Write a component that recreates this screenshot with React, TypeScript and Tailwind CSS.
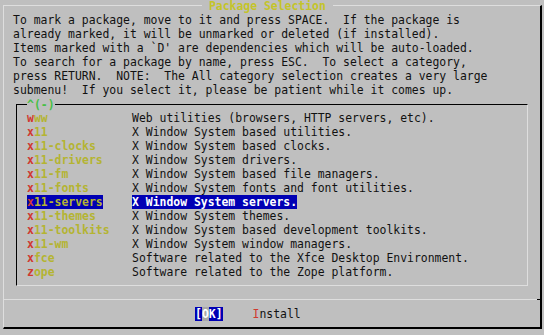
const intro = [
  "To mark a package, move to it and press SPACE.  If the package is",
  "already marked, it will be unmarked or deleted (if installed).",
  "Items marked with a `D' are dependencies which will be auto-loaded.",
  "To search for a package by name, press ESC.  To select a category,",
  "press RETURN.  NOTE:  The All category selection creates a very large",
  "submenu!  If you select it, please be patient while it comes up.",
];

const packages = [
  { name: "www", desc: "Web utilities (browsers, HTTP servers, etc)." },
  { name: "x11", desc: "X Window System based utilities." },
  { name: "x11-clocks", desc: "X Window System based clocks." },
  { name: "x11-drivers", desc: "X Window System drivers." },
  { name: "x11-fm", desc: "X Window System based file managers." },
  { name: "x11-fonts", desc: "X Window System fonts and font utilities." },
  { name: "x11-servers", desc: "X Window System servers.", active: true },
  { name: "x11-themes", desc: "X Window System themes." },
  { name: "x11-toolkits", desc: "X Window System based development toolkits." },
  { name: "x11-wm", desc: "X Window System window managers." },
  { name: "xfce", desc: "Software related to the Xfce Desktop Environment." },
  { name: "zope", desc: "Software related to the Zope platform." },
];

const PackageRow = ({ name, desc, active }: { name: string; desc: string; active?: boolean }) => {
  return (
    <div className="flex h-[14px] items-center">
      <div className="w-[105px] shrink-0 font-bold">
        <span className={active ? "bg-[#0000b4]" : ""}>
          <span className="text-[#d03a30]">{name[0]}</span>
          <span className="text-[#b4b432]">{name.slice(1)}</span>
        </span>
      </div>
      <span className={active ? "bg-[#0000b4] text-white font-bold" : "text-[#111]"}>{desc}</span>
    </div>
  );
};

export default function App() {
  return (
    <div
      className="w-[544px] h-[335px] overflow-hidden bg-[#bfbfbf] pt-[5px] pl-[3px] text-[11.43px] leading-[14px] whitespace-pre"
      style={{ fontFamily: '"DejaVu Sans Mono", "Liberation Mono", monospace' }}
    >
      <div className="relative w-[539px] border-l border-t border-[#dedede] border-r-2 border-b-2 border-r-black border-b-black">
        {/* title sits on the top border */}
        <div className="absolute -top-[7px] left-[198px] bg-[#bfbfbf] font-bold text-[#c4c42a]">
          {" Package Selection "}
        </div>

        <div className="pt-[7px] pl-[9px] text-[#111]">
          {intro.map((line) => (
            <div key={line} className="h-[14px]">
              {line}
            </div>
          ))}
        </div>

        <div className="relative mt-[7px] ml-[12px] w-[512px] border-l border-t border-black border-r border-b border-r-[#dedede] border-b-[#dedede] pt-[6px] pb-[6px] pl-[10px]">
          <div className="absolute -top-[7px] left-[10px] bg-[#bfbfbf] font-bold text-[#46c046]">^(-)</div>
          {packages.map((p) => (
            <PackageRow key={p.name} {...p} />
          ))}
        </div>

        <div className="mt-[13px] flex h-px">
          <div className="flex-1 bg-[#dedede]" />
          <div className="w-[3px] bg-black" />
        </div>

        <div className="mt-[7px] mb-[6px] flex h-[14px] items-center pl-[191px]">
          <span className="flex bg-[#0000b4] font-bold text-white">
            <span>[</span>
            <span className="bg-[#a8a8a8] text-white">O</span>
            <span>K</span>
            <span>]</span>
          </span>
          <span className="ml-[30px]">
            <span className="text-[#d03a30]">I</span>
            <span className="text-[#111]">nstall</span>
          </span>
        </div>
      </div>
    </div>
  );
}
